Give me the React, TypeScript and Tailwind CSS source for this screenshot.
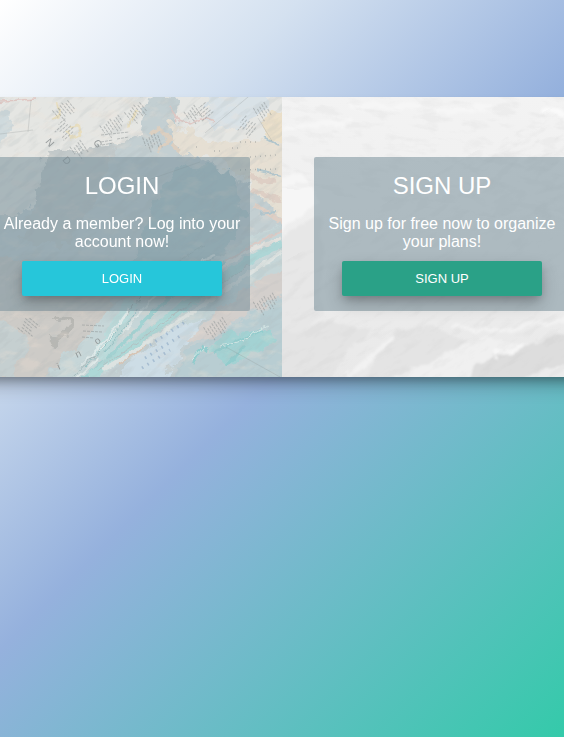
type CardProps = {
  title: string;
  text: string;
  tone: string;
};

function AccessCard({ title, text, tone }: CardProps) {
  return (
    <section className="relative flex w-full flex-col items-center rounded-xs bg-[#78909a]/55 px-2 pt-3 pb-[15px] text-center text-white">
      <h2 className="text-2xl leading-[34px]">{title}</h2>
      <p className="mt-3 leading-[18px]">{text}</p>
      <button
        type="button"
        className={`mt-[10px] h-[35px] w-[200px] rounded-xs text-[13px] font-medium shadow-[0_8px_17px_0_rgba(0,0,0,0.2),0_4px_8px_-2px_rgba(0,0,0,0.2)] ${tone}`}
      >
        {title}
      </button>
    </section>
  );
}

/* Fans of short strokes that stand for the place names along a coast. */
const NAME_GROUPS = [
  { x: 60, y: 104, n: 7, a: -40 },
  { x: 72, y: 126, n: 6, a: 48 },
  { x: 78, y: 141, n: 5, a: -35 },
  { x: 108, y: 120, n: 8, a: -34 },
  { x: 132, y: 106, n: 7, a: -40 },
  { x: 152, y: 134, n: 6, a: -20 },
  { x: 192, y: 106, n: 5, a: -35 },
  { x: 212, y: 110, n: 5, a: 50 },
  { x: 254, y: 122, n: 6, a: 40 },
  { x: 262, y: 103, n: 5, a: -30 },
  { x: 212, y: 322, n: 8, a: -32 },
  { x: 262, y: 297, n: 8, a: -28 },
  { x: 24, y: 320, n: 6, a: -50 },
];

const LETTERS = [
  { c: "N", x: 45, y: 142, a: 50 },
  { c: "D", x: 62, y: 160, a: 50 },
  { c: "G", x: 93, y: 142, a: 60 },
  { c: "o", x: 97, y: 345, a: -35 },
  { c: "n", x: 77, y: 358, a: -25 },
  { c: "i", x: 59, y: 370, a: -25 },
];

/* Channel ridges of the sea floor, each a long shallow curve. */
const STREAKS = [
  { d: "M70 380 Q105 345 135 305 T205 245", c: "#a3b9bb", w: 1 },
  { d: "M76 380 Q112 345 142 310 T215 255", c: "#dfe9e8", w: 2 },
  { d: "M83 379 Q118 350 148 318 T225 262", c: "#a2d2d2", w: 4 },
  { d: "M90 377 Q122 354 158 326 T240 266", c: "#aed8d7", w: 9 },
  { d: "M98 358 Q112 338 132 300", c: "#bcdcdc", w: 14 },
  { d: "M80 366 Q103 345 126 314", c: "#dfeaea", w: 2 },
  { d: "M92 358 Q112 338 134 304", c: "#a3b1b2", w: 1 },
  { d: "M99 352 Q116 334 129 309", c: "#e2ecea", w: 2 },
  { d: "M104 353 Q120 336 138 309", c: "#93c4c6", w: 1 },
  { d: "M86 366 Q106 348 120 326", c: "#93c4c6", w: 1 },
  { d: "M97 371 Q122 354 152 331 T250 265", c: "#b3c1c2", w: 1 },
  { d: "M103 370 Q130 355 160 334 T282 252", c: "#dde3e1", w: 4 },
  { d: "M118 364 Q130 358 146 346", c: "#d8c3b2", w: 1.5 },
  { d: "M190 300 Q235 265 282 243", c: "#aed6d6", w: 8 },
  { d: "M215 272 Q245 250 282 238", c: "#e2e1dd", w: 3 },
  { d: "M225 262 Q255 244 282 231", c: "#dccbc6", w: 2 },
];

function MapArt() {
  return (
    <svg className="absolute inset-0 h-full w-full" viewBox="-38 97 320 280" preserveAspectRatio="xMidYMid slice" aria-hidden="true">
      <defs>
        <filter id="coast" x="-10%" y="-10%" width="120%" height="120%">
          <feTurbulence type="fractalNoise" baseFrequency="0.07" numOctaves="4" seed="8" />
          <feDisplacementMap in="SourceGraphic" scale="18" xChannelSelector="R" yChannelSelector="G" />
          <feGaussianBlur stdDeviation="0.5" />
        </filter>
        <filter id="ripple" x="-10%" y="-10%" width="120%" height="120%">
          <feTurbulence type="fractalNoise" baseFrequency="0.12" numOctaves="3" seed="5" />
          <feDisplacementMap in="SourceGraphic" scale="6" xChannelSelector="R" yChannelSelector="G" />
          <feGaussianBlur stdDeviation="0.5" />
        </filter>
        <filter id="speckle" x="0" y="0" width="100%" height="100%">
          <feTurbulence type="fractalNoise" baseFrequency="0.04 0.16" numOctaves="5" seed="3" />
          <feColorMatrix values="0 0 0 0 0.42  0 0 0 0 0.46  0 0 0 0 0.47  0 5 0 0 -2.5" />
        </filter>
        <filter id="tint" x="0" y="0" width="100%" height="100%">
          <feTurbulence type="fractalNoise" baseFrequency="0.05 0.1" numOctaves="4" seed="21" />
          <feColorMatrix values="0 0 0 0 0.88  0 0 0 0 0.76  0 0 0 0 0.66  4 0 0 0 -2.1" />
        </filter>
      </defs>
      <rect x="-38" y="97" width="320" height="280" fill="#e5e6e3" />
      <g filter="url(#coast)">
        <path d="M-50 215 L20 215 60 180 95 150 125 140 140 132 145 95 180 98 178 125 200 160 290 210 290 390 -50 390Z" fill="#c3cfd2" />
        <path d="M-50 105 L4 112 14 124 8 138 -10 150 -50 150Z" fill="#cfdadd" />
        <path d="M168 122 L190 130 205 142 290 140 290 225 250 185 215 158 180 155Z" fill="#e5dfd3" />
        <path d="M210 95 L268 95 264 112 240 128 215 130 205 122Z" fill="#d9e2e7" />
        <path d="M262 125 L270 112 290 108 290 142 266 140Z" fill="#eadfc9" />
        <path d="M45 150 L120 145 90 205 70 245 20 240 40 190Z" fill="#c2c9ca" />
        <path d="M-50 250 L60 265 110 275 108 318 90 330 60 360 45 385 -50 385Z" fill="#cdcbc7" />
        <path d="M-50 335 L0 322 22 330 30 348 12 375 -50 385Z" fill="#c5cfd0" />
        <path d="M180 165 L230 170 245 215 220 260 170 285 135 260 150 210Z" fill="#adc5ca" />
        <path d="M50 385 L60 360 95 325 115 305 145 290 200 265 255 235 295 220 295 285 220 312 145 340 95 385Z" fill="#c6d6d8" />
        <path d="M105 385 L150 345 190 320 205 315 185 350 160 385Z" fill="#cddde6" />
        <path d="M185 340 L225 305 290 262 290 290 240 318 210 338Z" fill="#d3cfcc" />
        <path d="M165 385 L195 345 240 322 290 292 290 390Z" fill="#b8cdd2" />
        <path d="M214 345 L226 330 255 334 272 330 276 342 250 352 235 368 218 360Z" fill="#a3d2d3" />
        <path d="M55 320 C72 318 74 328 67 337 C59 344 51 340 52 337" fill="none" stroke="#b8b8b4" strokeWidth="6" />
      </g>
      <rect x="-38" y="97" width="320" height="280" filter="url(#tint)" opacity="0.25" />
      <g filter="url(#ripple)" fill="none">
        {STREAKS.map((s) => (
          <path key={s.d} d={s.d} stroke={s.c} strokeWidth={s.w} />
        ))}
        <path d="M57 102 L60 115 52 120 M66 130 L72 138 80 134 78 126 70 128 M128 126 L138 110" stroke="#e9dcb6" strokeWidth="2.5" opacity="0.8" />
        <path d="M-30 103 L36 99 M176 118 L190 124 205 117 214 121 M170 105 L178 122" stroke="#e0c8c4" strokeWidth="1.5" />
        <path d="M192 364 L202 347 208 351 M214 352 L240 340 262 330 M226 366 L245 345" stroke="#92cccd" strokeWidth="3" />
        <path d="M192 360 L205 346 M220 346 L238 342 268 326" stroke="#d5e6e5" strokeWidth="1" />
        <path d="M150 135 L160 128 170 140 158 150 M172 145 L180 152" stroke="#dccfc0" strokeWidth="4" />
        <path d="M250 175 L262 182 275 180 M255 205 L282 222 M252 190 L280 200" stroke="#decfc5" strokeWidth="5" />
        <path d="M256 170 L280 176 M258 214 L276 212 M264 138 L280 146" stroke="#b2c6cd" strokeWidth="2" />
      </g>
      <g transform="rotate(-38 122 237)">
        <rect x="-140" y="0" width="540" height="480" filter="url(#speckle)" opacity="0.18" />
      </g>
      <g fill="none" stroke="#8b9192" strokeWidth="1" opacity="0.5">
        <path d="M31 100 L28 132 M0 134 L33 130 M205 133 L248 97 M105 195 L200 162 M226 347 L280 377 M258 118 L272 141" opacity="0.5" />
        {NAME_GROUPS.map((g) => (
          <g key={`${g.x}-${g.y}`} transform={`translate(${g.x} ${g.y}) rotate(${g.a})`}>
            {Array.from({ length: g.n }, (_, i) => (
              <path key={i} d={`M${i * 3 - 10} ${(i * 3) % 4} v${9 + ((i * 5) % 7)}`} strokeDasharray="3 1" />
            ))}
          </g>
        ))}
        <path d="M101 135 L129 132 M101 142 L113 140 M117 139 L129 137 M102 145 L113 143 M82 325 L104 326 M83 331 L102 332 M82 337 L94 338" strokeDasharray="3 1" />
        <path d="M240 142 L258 142 M196 147 L201 147 M214 151 L220 151 M232 148 L242 148 M250 157 L276 155 M240 170 L278 169" strokeDasharray="1 4" strokeWidth="1.5" />
        <path d="M150 345 L185 322 M145 358 L180 336 M142 368 L170 350" stroke="#7f9dbd" strokeDasharray="1.5 5" strokeWidth="3" />
      </g>
      <g fill="#8a8f90" fontSize="10" opacity="0.85">
        {LETTERS.map((l) => (
          <text key={l.c} transform={`translate(${l.x} ${l.y}) rotate(${l.a})`}>
            {l.c}
          </text>
        ))}
      </g>
    </svg>
  );
}

function ReliefArt() {
  return (
    <svg className="absolute inset-0 h-full w-full" viewBox="282 97 320 280" preserveAspectRatio="xMidYMid slice" aria-hidden="true">
      <defs>
        <linearGradient id="relief-base" x1="0" y1="0" x2="0" y2="1">
          <stop offset="0" stopColor="#f3f3f3" />
          <stop offset="1" stopColor="#e9e9e9" />
        </linearGradient>
        <filter id="ridge" x="-10%" y="-10%" width="120%" height="120%">
          <feTurbulence type="fractalNoise" baseFrequency="0.05" numOctaves="4" seed="12" />
          <feDisplacementMap in="SourceGraphic" scale="14" xChannelSelector="R" yChannelSelector="G" />
          <feGaussianBlur stdDeviation="1" />
        </filter>
        <filter id="stone" x="0" y="0" width="100%" height="100%">
          <feTurbulence type="fractalNoise" baseFrequency="0.04 0.12" numOctaves="5" seed="6" />
          <feColorMatrix values="0 0 0 0 0.5  0 0 0 0 0.5  0 0 0 0 0.5  0 5 0 0 -2.5" />
        </filter>
      </defs>
      <rect x="282" y="97" width="320" height="280" fill="url(#relief-base)" />
      <g filter="url(#ridge)">
        <path d="M275 178 L300 172 314 190 318 205 290 225 275 240Z" fill="#f6f6f6" />
        <path d="M275 245 L300 225 322 215 322 315 275 345Z" fill="#e7e7e7" />
        <path d="M275 335 L320 322 370 330 345 360 325 385 275 385Z" fill="#e4e4e4" />
        <path d="M365 385 L375 350 400 328 435 326 470 345 440 365 400 385Z" fill="#e4e4e4" />
        <path d="M345 385 L370 355 395 335 M455 328 L500 330 575 318" fill="none" stroke="#f2f2f2" strokeWidth="4" />
        <path d="M385 385 L425 365 460 345 490 338 530 346 500 362 460 385Z" fill="#f0f0f0" />
        <path d="M455 390 L480 362 530 345 575 328 575 372 500 385Z" fill="#dddddd" />
        <path d="M495 357 L524 346" fill="none" stroke="#f6f6f6" strokeWidth="5" />
        <path d="M500 385 L545 372 600 350 600 390Z" fill="#ececec" />
        <path d="M545 112 L560 114 580 124" fill="none" stroke="#fafafa" strokeWidth="6" />
        <path d="M285 130 L350 120 M350 106 L495 108" stroke="#f6f6f6" strokeWidth="6" />
      </g>
      <g transform="rotate(8 442 237)">
        <rect x="240" y="40" width="420" height="170" filter="url(#stone)" opacity="0.09" />
      </g>
      <g transform="rotate(-30 442 237)">
        <rect x="200" y="180" width="460" height="340" filter="url(#stone)" opacity="0.09" />
      </g>
    </svg>
  );
}

export default function App() {
  return (
    <main className="min-h-screen overflow-hidden bg-[linear-gradient(135deg,#ffffff_0%,#d4e1f0_23%,#95b1dd_50%,#34caaa_100%)] pt-[97px] font-['Liberation_Sans',Arial,sans-serif]">
      <div className="flex justify-center">
        <div className="grid w-full min-w-[640px] max-w-[960px] shrink-0 grid-cols-2 shadow-[0_12px_17px_-4px_rgba(0,0,0,0.25),0_6px_10px_-4px_rgba(0,0,0,0.3)]">
          <div className="relative flex min-h-[280px] items-center overflow-hidden px-8 pb-[6px]">
            <MapArt />
            <AccessCard
              title="LOGIN"
              text="Already a member? Log into your account now!"
              tone="bg-[#26c6da]"
            />
          </div>
          <div className="relative flex min-h-[280px] items-center overflow-hidden px-8 pb-[6px]">
            <ReliefArt />
            <AccessCard
              title="SIGN UP"
              text="Sign up for free now to organize your plans!"
              tone="bg-[#2aa187]"
            />
          </div>
        </div>
      </div>
    </main>
  );
}
